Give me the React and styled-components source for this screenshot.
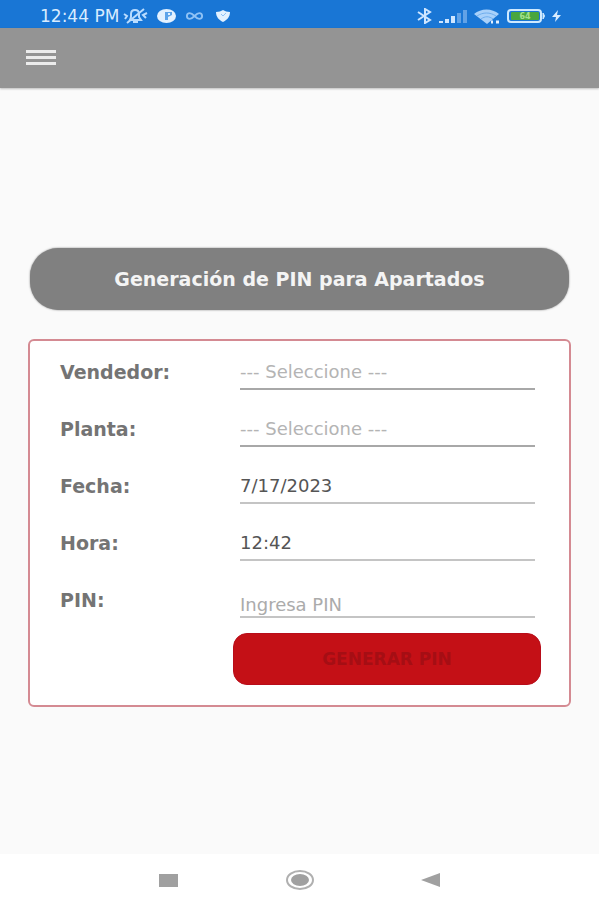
import React, { useState } from 'react';
import styled, { createGlobalStyle } from 'styled-components';

const GlobalStyle = createGlobalStyle`
  * {
    box-sizing: border-box;
  }
  body {
    margin: 0;
    background: #fafafa;
    font-family: 'DejaVu Sans', Roboto, sans-serif;
  }
`;

const Screen = styled.div`
  display: flex;
  flex-direction: column;
  min-height: 100vh;
`;

const StatusBar = styled.div`
  display: flex;
  justify-content: space-between;
  height: 28px;
  padding: 4px 38px 0 40px;
  background: #1976d5;
  color: #d8ecff;
`;

const StatusGroup = styled.div`
  display: flex;
  align-items: center;
  gap: ${({ $gap }) => $gap}px;
`;

const Clock = styled.span`
  font-size: 17px;
  line-height: 24px;
  white-space: nowrap;
`;

const Icon = styled.svg`
  display: block;
  flex: none;
`;

const Header = styled.header`
  display: flex;
  align-items: center;
  height: 60px;
  padding: 0 26px;
  background: #949494;
  box-shadow: 0 1px 2px rgba(0, 0, 0, 0.25);
`;

const IconButton = styled.button`
  display: flex;
  align-items: center;
  justify-content: center;
  width: ${({ $width }) => $width}px;
  height: 40px;
  padding: 0;
  border: none;
  background: none;
  cursor: pointer;
`;

const Main = styled.main`
  display: flex;
  flex: 1;
  flex-direction: column;
  justify-content: center;
  gap: 29px;
  padding: 13px 28px 0;
`;

const Title = styled.h1`
  margin: 0 2px;
  padding: 20px;
  border-radius: 28px;
  background: #808080;
  box-shadow: 0 0 2px rgba(0, 0, 0, 0.5);
  color: #f4f4f4;
  font-size: 19px;
  font-weight: 700;
  line-height: 22px;
  text-align: center;
`;

const Card = styled.form`
  display: flex;
  flex-direction: column;
  gap: 15px;
  padding: 9px 28px 20px 30px;
  border: 2px solid #d48a92;
  border-radius: 6px;
  background: #fff;
`;

const Fields = styled.div`
  display: flex;
  flex-direction: column;
  gap: 17px;
`;

const Row = styled.div`
  display: grid;
  grid-template-columns: 180fr 295fr;
  height: 40px;
  padding-right: 6px;
`;

const Label = styled.label`
  color: #747474;
  font-size: 19px;
  font-weight: 700;
  line-height: 44px;
`;

const Input = styled.input`
  width: 100%;
  height: 40px;
  padding: ${({ $low }) => ($low ? '14px 0 0' : '5px 0 0')};
  border: none;
  border-bottom: 2px solid #c4c4c4;
  border-radius: 0;
  outline: none;
  background: transparent;
  color: #555;
  font-family: inherit;
  font-size: 18px;
  &::placeholder {
    color: #ababab;
    opacity: 1;
  }
`;

const Select = styled.select`
  width: 100%;
  height: 40px;
  padding: 4px 0 0;
  border: none;
  border-bottom: 2px solid #a8a8a8;
  border-radius: 0;
  outline: none;
  appearance: none;
  background: transparent;
  color: #b4b4b4;
  font-family: inherit;
  font-size: 18px;
`;

const Actions = styled.div`
  display: grid;
  grid-template-columns: 173fr 308fr;
`;

const SubmitButton = styled.button`
  grid-column: 2;
  height: 52px;
  border: 1px solid #b80d1a;
  border-radius: 14px;
  background: #c41016;
  color: #a50e14;
  font-family: inherit;
  font-size: 17px;
  font-weight: 700;
  cursor: pointer;
`;

const NavBar = styled.nav`
  display: flex;
  align-items: center;
  justify-content: center;
  gap: 71px;
  height: 46px;
  padding-top: 6px;
  background: #fff;
`;

const StatusIcons = () => (
  <StatusBar>
    <StatusGroup $gap={9}>
      <StatusGroup $gap={4}>
        <Clock>12:44 PM</Clock>
        <Icon width="25" height="16" viewBox="0 0 25 16" fill="none" stroke="#b9dcff" strokeWidth="2">
          <path d="M7 12h11l-2-3V6c0-2-1-4-4-4S8 4 8 6v3z" />
          <path d="M10 14h5M4 15L21 1M1 6l3 2-2 3M24 5l-4 2 3 3" />
        </Icon>
      </StatusGroup>
      <Icon width="19" height="14" viewBox="0 0 19 14">
        <ellipse cx="9.5" cy="7" rx="9.5" ry="7" fill="#e3f1ff" />
        <path d="M8 3h7v3l-4 2v3H8z" fill="#5ea4ea" />
        <path d="M11 4h2v2h-2z" fill="#e3f1ff" />
      </Icon>
      <Icon width="19" height="8" viewBox="0 0 20 8" fill="none" stroke="#8fc2f5" strokeWidth="2">
        <path d="M10 4C8 2 7 1 5 1a3 3 0 0 0 0 6c2 0 3-1 5-3s3-3 5-3a3 3 0 0 1 0 6c-2 0-3-1-5-3" />
      </Icon>
      <Icon width="20" height="12" viewBox="0 0 20 12">
        <path d="M3 2c3 0 5-1 7-2 2 1 4 2 7 2 0 5-3 8-7 10C6 10 3 7 3 2z" fill="#e3f1ff" />
        <path d="M8 4l2 2 3-3" fill="none" stroke="#8fc2f5" />
      </Icon>
    </StatusGroup>
    <StatusGroup $gap={7}>
      <Icon width="15" height="16" viewBox="0 0 15 16" fill="none" stroke="#cfe6ff" strokeWidth="2">
        <path d="M1 4l12 8-5 3V1l5 3L1 12" />
      </Icon>
      <Icon width="28" height="14" viewBox="0 0 28 14" fill="#cfe6ff">
        <path d="M0 12h4v2H0zM6 10h4v4H6zM12 7h4v7h-4z" />
        <path d="M18 4h4v10h-4zM24 1h4v13h-4z" opacity="0.4" />
      </Icon>
      <Icon width="26" height="15" viewBox="0 0 26 15">
        <path d="M0 5C7-1 18-1 25 5L13 15z" fill="#a9d1fa" />
        <path d="M3 7c6-4 13-4 19 0M7 10c4-3 8-3 12 0" fill="none" stroke="#6faeee" />
        <path d="M17 13h2M22 13h3" stroke="#e3f1ff" strokeWidth="3" />
      </Icon>
      <StatusGroup $gap={6}>
        <Icon width="39" height="14" viewBox="0 0 39 14">
          <rect x="1" y="1" width="33" height="12" rx="3" fill="#1976d5" stroke="#cfeaff" strokeWidth="2" />
          <path d="M36 4q3 3 0 6z" fill="#cfeaff" stroke="#cfeaff" />
          <rect x="4" y="3" width="28" height="8" rx="1" fill="#49a63f" />
          <text x="18" y="10" textAnchor="middle" fontSize="8" fontWeight="700" fill="#a5e08d">64</text>
        </Icon>
        <Icon width="9" height="12" viewBox="0 0 9 12">
          <path d="M6 0L0 7h4l-1 5 6-7H5z" fill="#d8ecff" />
        </Icon>
      </StatusGroup>
    </StatusGroup>
  </StatusBar>
);

const SelectField = ({ id, label }) => (
  <Row>
    <Label htmlFor={id}>{label}</Label>
    <Select id={id} name={id}>
      <option value="">--- Seleccione ---</option>
    </Select>
  </Row>
);

const App = () => {
  const [values, setValues] = useState({ fecha: '7/17/2023', hora: '12:42', pin: '' });

  const onChange = (e) => setValues({ ...values, [e.target.name]: e.target.value });

  return (
    <Screen>
      <GlobalStyle />
      <StatusIcons />
      <Header>
        <IconButton type="button" aria-label="Menú" $width={30}>
          <Icon width="30" height="16" viewBox="0 0 30 16" fill="#ececec">
            <path d="M0 0h30v3H0zM0 6h30v3H0zM0 12h30v3H0z" />
          </Icon>
        </IconButton>
      </Header>
      <Main>
        <Title>Generación de PIN para Apartados</Title>
        <Card onSubmit={(e) => e.preventDefault()}>
          <Fields>
            <SelectField id="vendedor" label="Vendedor:" />
            <SelectField id="planta" label="Planta:" />
            <Row>
              <Label htmlFor="fecha">Fecha:</Label>
              <Input id="fecha" name="fecha" value={values.fecha} onChange={onChange} />
            </Row>
            <Row>
              <Label htmlFor="hora">Hora:</Label>
              <Input id="hora" name="hora" value={values.hora} onChange={onChange} />
            </Row>
            <Row>
              <Label htmlFor="pin">PIN:</Label>
              <Input $low id="pin" name="pin" placeholder="Ingresa PIN" value={values.pin} onChange={onChange} />
            </Row>
          </Fields>
          <Actions>
            <SubmitButton type="submit">GENERAR PIN</SubmitButton>
          </Actions>
        </Card>
      </Main>
      <NavBar>
        <IconButton type="button" aria-label="Recientes" $width={60}>
          <Icon width="19" height="13" viewBox="0 0 19 13">
            <rect width="19" height="13" fill="#a0a0a0" />
          </Icon>
        </IconButton>
        <IconButton type="button" aria-label="Inicio" $width={60}>
          <Icon width="28" height="20" viewBox="0 0 28 20">
            <ellipse cx="14" cy="10" rx="13" ry="9" fill="none" stroke="#b0b0b0" strokeWidth="2" />
            <ellipse cx="14" cy="10" rx="9" ry="6" fill="#a0a0a0" />
          </Icon>
        </IconButton>
        <IconButton type="button" aria-label="Atrás" $width={60}>
          <Icon width="19" height="14" viewBox="0 0 19 14">
            <path d="M19 0v14L0 7z" fill="#a0a0a0" />
          </Icon>
        </IconButton>
      </NavBar>
    </Screen>
  );
};

export default App;
